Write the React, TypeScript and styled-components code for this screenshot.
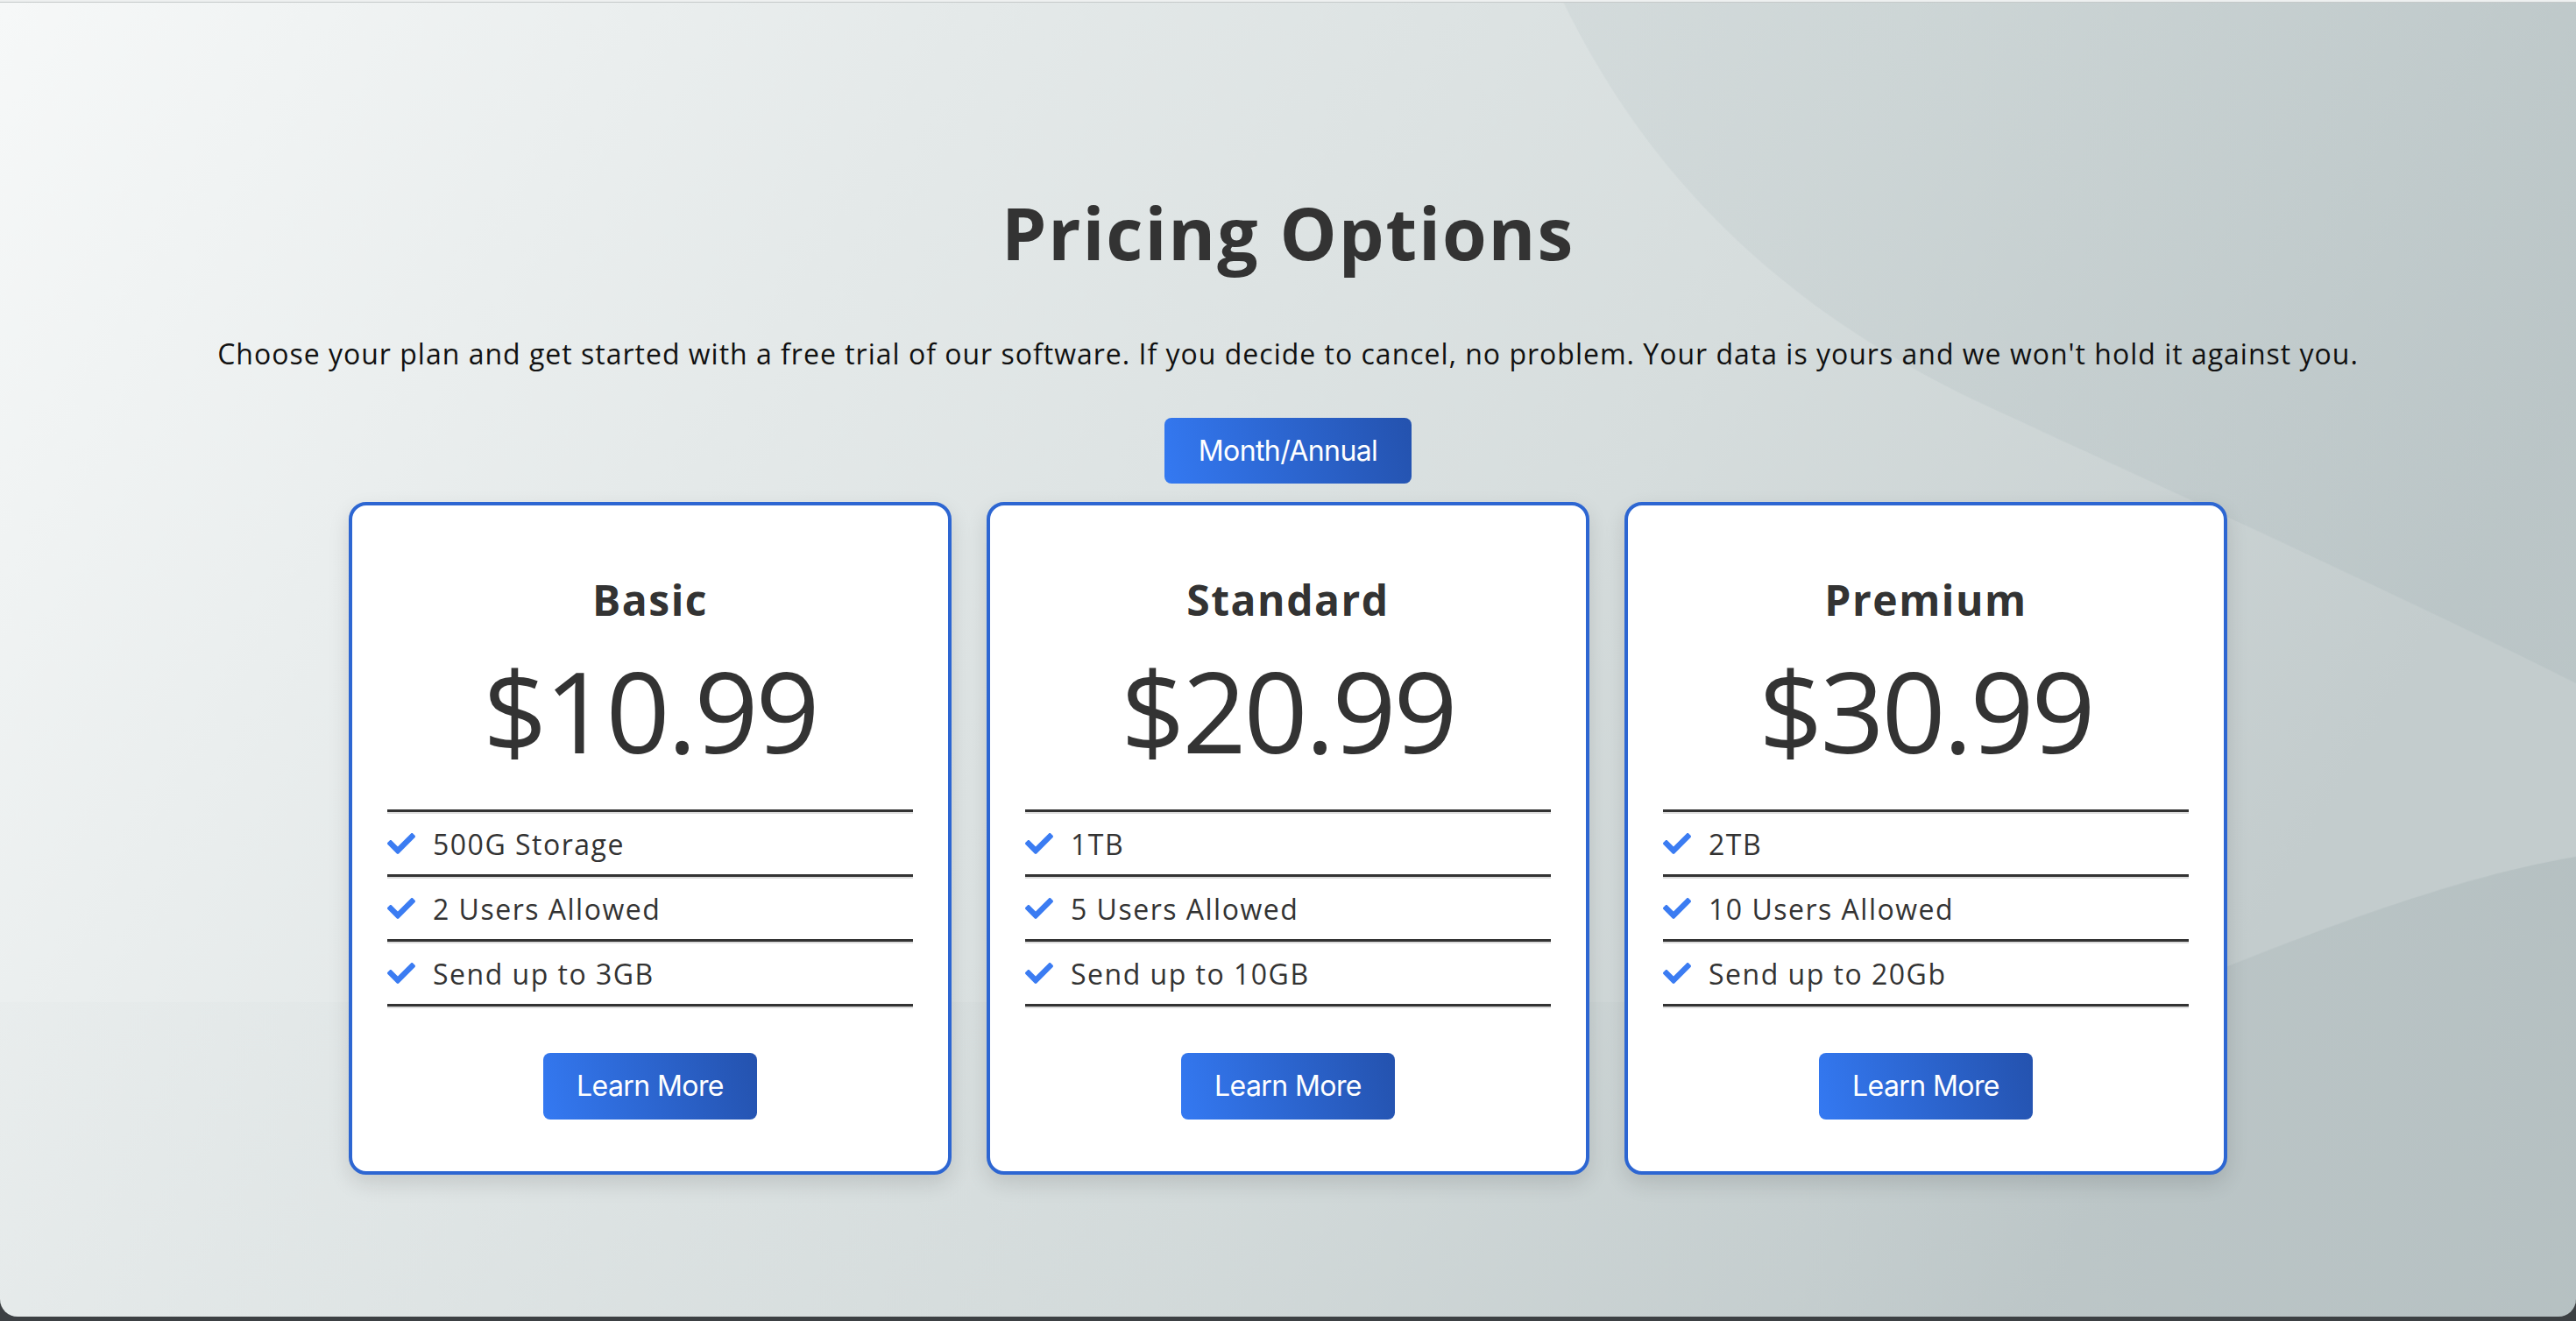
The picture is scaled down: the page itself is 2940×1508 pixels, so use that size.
import styled, { createGlobalStyle } from 'styled-components';
import { FaCheck } from 'react-icons/fa';

const plans = [
  {
    id: 'basic',
    name: 'Basic',
    price: '$10.99',
    features: ['500G Storage', '2 Users Allowed', 'Send up to 3GB'],
  },
  {
    id: 'standard',
    name: 'Standard',
    price: '$20.99',
    features: ['1TB', '5 Users Allowed', 'Send up to 10GB'],
  },
  {
    id: 'premium',
    name: 'Premium',
    price: '$30.99',
    features: ['2TB', '10 Users Allowed', 'Send up to 20Gb'],
  },
];

// soft grey abstract waves behind the page
const wavesSvg = `<svg xmlns='http://www.w3.org/2000/svg' viewBox='0 0 2940 1503' preserveAspectRatio='none'>
<defs>
<linearGradient id='b' x1='0' y1='0' x2='1' y2='0.3'>
<stop offset='0' stop-color='#f6f8f8'/>
<stop offset='0.35' stop-color='#e4e9e9'/>
<stop offset='0.68' stop-color='#d6dddd'/>
<stop offset='1' stop-color='#c3cccd'/>
</linearGradient>
<linearGradient id='t' x1='0' y1='0' x2='1' y2='0'>
<stop offset='0' stop-color='#8b9fa3' stop-opacity='0.1'/>
<stop offset='1' stop-color='#8b9fa3' stop-opacity='0.15'/>
</linearGradient>
<linearGradient id='g' gradientUnits='userSpaceOnUse' x1='0' y1='0' x2='2940' y2='0'>
<stop offset='0' stop-color='#6f8488' stop-opacity='0.02'/>
<stop offset='0.7' stop-color='#6f8488' stop-opacity='0.04'/>
<stop offset='1' stop-color='#6f8488' stop-opacity='0.16'/>
</linearGradient>
</defs>
<rect width='2940' height='1503' fill='url(#b)'/>
<path d='M1783 0 C1880 200 2030 350 2260 460 C2520 580 2760 690 2940 780 L2940 0 Z' fill='url(#t)'/>
<path d='M0 1144 L2440 1144 C2600 1080 2780 1005 2940 978 L2940 1503 L0 1503 Z' fill='url(#g)'/>
</svg>`;
const waves = `url("data:image/svg+xml,${encodeURIComponent(wavesSvg)}")`;

const App = () => {
  return (
    <>
      <GlobalStyle />
      <Window>
        <Title>Pricing Options</Title>
        <Subtitle>
          Choose your plan and get started with a free trial of our software. If you decide to
          cancel, no problem. Your data is yours and we won't hold it against you.
        </Subtitle>
        <BlueButton>Month/Annual</BlueButton>
        <Cards>
          {plans.map((plan) => (
            <Card key={plan.id}>
              <PlanName>{plan.name}</PlanName>
              <Price>{plan.price}</Price>
              <FeatureList>
                {plan.features.map((feature) => (
                  <Feature key={feature}>
                    <Check />
                    {feature}
                  </Feature>
                ))}
              </FeatureList>
              <LearnMore>Learn More</LearnMore>
            </Card>
          ))}
        </Cards>
      </Window>
    </>
  );
};

const GlobalStyle = createGlobalStyle`
  body {
    margin: 0;
    background: #3c4043;
    font-family: 'Open Sans', sans-serif;
  }
`;

const Window = styled.main`
  height: 1503px;
  box-sizing: border-box;
  padding-top: 216px;

  display: flex;
  flex-direction: column;
  align-items: center;

  border-radius: 0 0 20px 20px;
  background: ${waves} center / 100% 100% no-repeat;
  box-shadow: inset 0 2px 0 #eef0f0, inset 0 3px 0 #c5c9c9;
`;

const Title = styled.h1`
  margin: 0;

  font: 700 82px/1.2 'Open Sans', sans-serif;
  letter-spacing: 1.9px;
  color: #333;
`;

const Subtitle = styled.p`
  margin: 66px 0 0;

  font: 400 32px/1.5 'Open Sans', sans-serif;
  letter-spacing: 1px;
  white-space: nowrap;
  color: #111;
`;

const BlueButton = styled.button`
  height: 75px;
  margin-top: 49px;
  padding: 0 39px;

  border: 0;
  border-radius: 8px;
  background: linear-gradient(75deg, #3479f2 0%, #2452ae 100%);

  font: 400 32px 'Inter', sans-serif;
  letter-spacing: -0.6px;
  color: #fff;

  &:hover {
    cursor: pointer;
  }
`;

const Cards = styled.div`
  margin-top: 21px;

  display: flex;
  gap: 40px;
`;

const Card = styled.section`
  width: 688px;
  box-sizing: border-box;
  padding: 79px 40px 59px;

  display: flex;
  flex-direction: column;
  align-items: center;

  border: 4px solid #2d66d2;
  border-radius: 20px;
  background: #fff;
  box-shadow: 0 10px 24px rgba(0, 0, 0, 0.12);
`;

const PlanName = styled.h2`
  margin: 0;

  font: 700 48px/1.2 'Open Sans', sans-serif;
  letter-spacing: 1.5px;
  color: #333;
`;

const Price = styled.div`
  margin-top: 20px;

  font: 400 128px/1.2 'Open Sans', sans-serif;
  letter-spacing: -3px;
  color: #333;
`;

const FeatureList = styled.ul`
  align-self: stretch;
  margin: 36px 0 0;
  padding: 0;

  list-style: none;
  border-top: 3px solid #333;
  border-bottom: 2px solid #dcdcdc;
`;

const Feature = styled.li`
  height: 69px;

  display: flex;
  align-items: center;
  gap: 20px;

  border-top: 2px solid #dcdcdc;
  border-bottom: 3px solid #333;

  font: 400 32px 'Open Sans', sans-serif;
  letter-spacing: 1.5px;
  color: #333;
`;

const Check = styled(FaCheck)`
  width: 32px;
  height: 32px;
  flex: none;
  color: #3b7cf2;
`;

const LearnMore = styled(BlueButton)`
  height: 76px;
  margin-top: 51px;
  padding: 0 38px;
`;

export default App;
